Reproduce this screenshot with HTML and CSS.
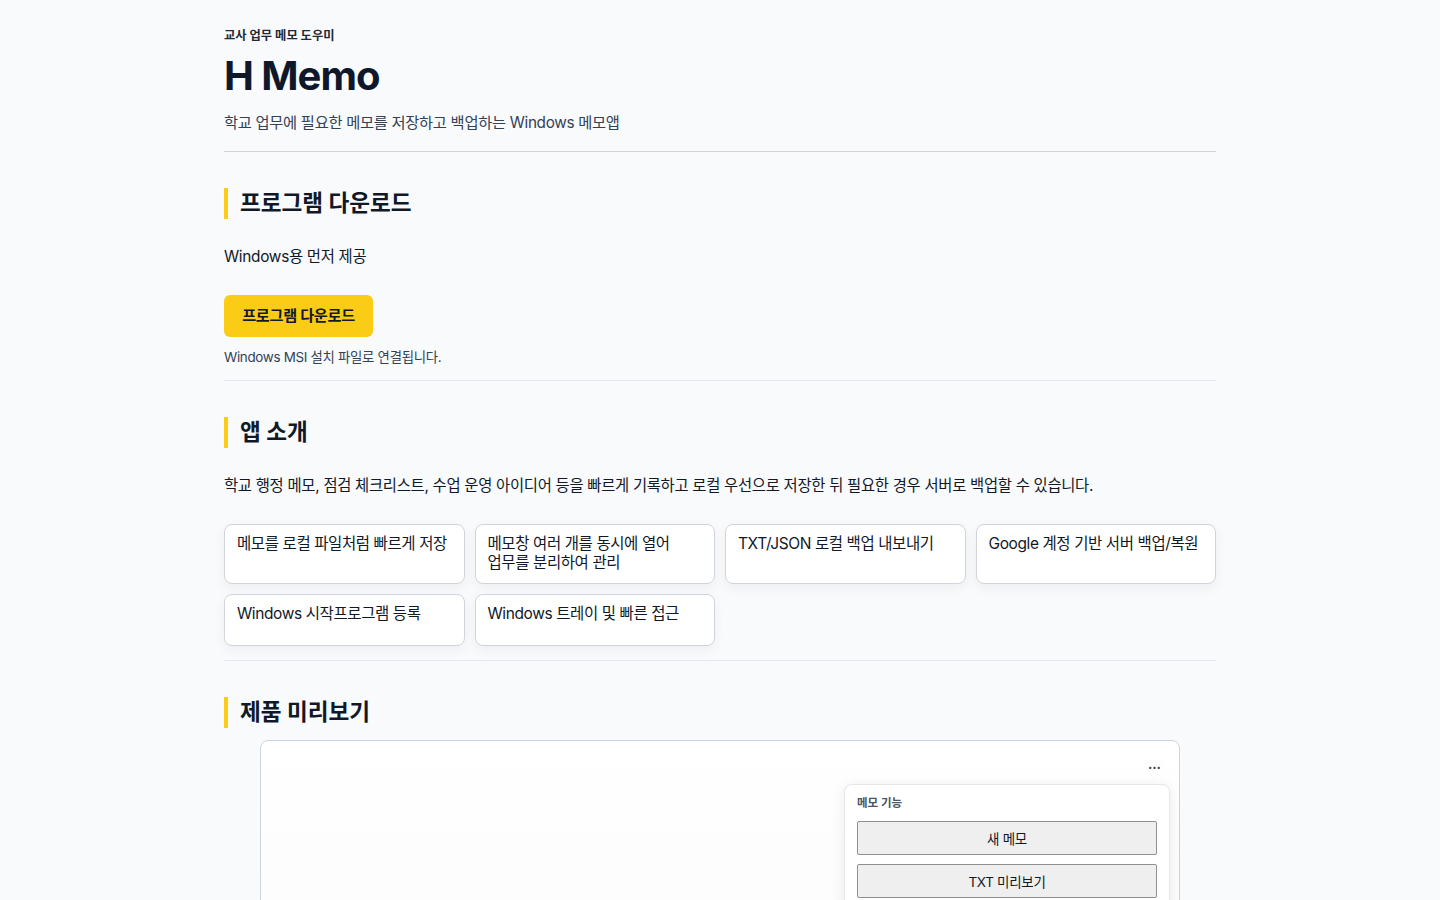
FILE: index.html
```html
<!DOCTYPE html>
<html lang="ko">
<head>
<meta charset="utf-8">
<title>H Memo</title>
<link rel="stylesheet" href="styles.css">
</head>
<body>
<main class="page">
  <header class="hero">
    <p class="eyebrow">교사 업무 메모 도우미</p>
    <h1 class="title">H Memo</h1>
    <p class="subtitle">학교 업무에 필요한 메모를 저장하고 백업하는 Windows 메모앱</p>
  </header>

  <section class="section download">
    <h2 class="section-title">프로그램 다운로드</h2>
    <p class="lead">Windows용 먼저 제공</p>
    <a class="download-btn" href="#">프로그램 다운로드</a>
    <p class="note">Windows MSI 설치 파일로 연결됩니다.</p>
  </section>

  <section class="section">
    <h2 class="section-title">앱 소개</h2>
    <p class="lead intro">학교 행정 메모, 점검 체크리스트, 수업 운영 아이디어 등을 빠르게 기록하고 로컬 우선으로 저장한 뒤 필요한 경우 서버로 백업할 수 있습니다.</p>
    <ul class="features">
      <li class="feature">메모를 로컬 파일처럼 빠르게 저장</li>
      <li class="feature">메모창 여러 개를 동시에 열어 업무를 분리하여 관리</li>
      <li class="feature">TXT/JSON 로컬 백업 내보내기</li>
      <li class="feature">Google 계정 기반 서버 백업/복원</li>
      <li class="feature">Windows 시작프로그램 등록</li>
      <li class="feature">Windows 트레이 및 빠른 접근</li>
    </ul>
  </section>

  <section class="section last">
    <h2 class="section-title">제품 미리보기</h2>
    <div class="preview">
      <div class="preview-top"><span class="dots">•••</span></div>
      <div class="preview-body">
        <div class="panel">
          <p class="panel-title">메모 기능</p>
          <div class="win-btn">새 메모</div>
          <div class="win-btn">TXT 미리보기</div>
          <div class="win-btn">JSON 백업</div>
        </div>
      </div>
    </div>
  </section>
</main>
</body>
</html>
```

FILE: styles.css
```css
* { box-sizing: border-box; }
html, body { margin: 0; padding: 0; }
body {
  background: #f8fafc;
  color: #111827;
  font-family: "Inter", "Noto Sans CJK KR", sans-serif;
}
.page {
  width: 992px;
  margin: 0 auto;
  padding-top: 27px;
}
.hero {
  border-bottom: 1px solid #cbd5e1;
  padding-bottom: 17px;
}
.eyebrow {
  margin: 0;
  font-size: 12.3px;
  font-weight: 700;
  line-height: 18px;
  color: #1f2937;
}
.title {
  margin: 5px 0 0;
  font-size: 40px;
  line-height: 52px;
  font-weight: 700;
  color: #0f172a;
  letter-spacing: -1px;
}
.subtitle {
  margin: 10px 0 0;
  font-size: 15.3px;
  line-height: 22px;
  color: #334155;
  letter-spacing: -0.3px;
}
.section {
  border-bottom: 1px solid #e2e8f0;
  padding: 36px 0 14px;
}
.section.download { padding-bottom: 13px; }
.section.last { border-bottom: 0; }
.section-title {
  margin: 0;
  border-left: 4px solid #facc15;
  padding: 0 0 2px 12px;
  font-size: 22.6px;
  line-height: 29px;
  font-weight: 700;
  color: #111827;
}
.lead {
  margin: 26px 0 0;
  font-size: 15.4px;
  line-height: 24px;
  color: #111827;
  letter-spacing: -0.3px;
}
.download-btn {
  display: inline-flex;
  align-items: center;
  justify-content: center;
  margin-top: 26px;
  width: 149px;
  height: 42px;
  background: #facc15;
  border-radius: 6px;
  color: #111827;
  font-size: 15.2px;
  font-weight: 700;
  text-decoration: none;
  letter-spacing: -0.3px;
  padding-bottom: 4px;
}
.note {
  margin: 10px 0 0;
  font-size: 13.4px;
  line-height: 20px;
  color: #334155;
  letter-spacing: -0.3px;
}
.features {
  list-style: none;
  margin: 26px 0 0;
  padding: 0;
  display: grid;
  grid-template-columns: repeat(4, 1fr);
  gap: 10px;
}
.feature {
  background: #ffffff;
  border: 1px solid #d1d5db;
  border-radius: 8px;
  box-shadow: 0 4px 12px rgba(15, 23, 42, 0.05);
  padding: 9px 12px 11px;
  font-size: 15.5px;
  line-height: 19px;
  color: #111827;
  letter-spacing: -0.4px;
  min-height: 52px;
  word-break: keep-all;
}
.preview {
  margin: 12px 36px 0;
  height: 320px;
  background: linear-gradient(180deg, #ffffff 0%, #fafafa 100%);
  border: 1px solid #cbd5e1;
  border-radius: 8px;
  padding: 0 9px 0 0;
  display: flex;
  flex-direction: column;
}
.preview-top {
  display: flex;
  justify-content: flex-end;
  padding: 23px 9px 0 0;
  height: 43px;
}
.dots {
  font-size: 7px;
  line-height: 8px;
  color: #374151;
  letter-spacing: 0.3px;
}
.preview-body {
  display: flex;
  justify-content: flex-end;
}
.panel {
  width: 326px;
  background: #ffffff;
  border: 1px solid #e5e7eb;
  border-radius: 8px;
  box-shadow: 0 2px 14px rgba(15, 23, 42, 0.08);
  padding: 9px 12px 12px;
}
.panel-title {
  margin: 0 0 9px;
  font-size: 11.5px;
  line-height: 18px;
  font-weight: 700;
  color: #4b5563;
}
.win-btn {
  height: 34px;
  background: #efefef;
  border: 1px solid #8f8f8f;
  border-radius: 2px;
  display: flex;
  align-items: center;
  justify-content: center;
  font-size: 13.5px;
  color: #111827;
  margin-bottom: 9px;
  letter-spacing: -0.3px;
}
```
